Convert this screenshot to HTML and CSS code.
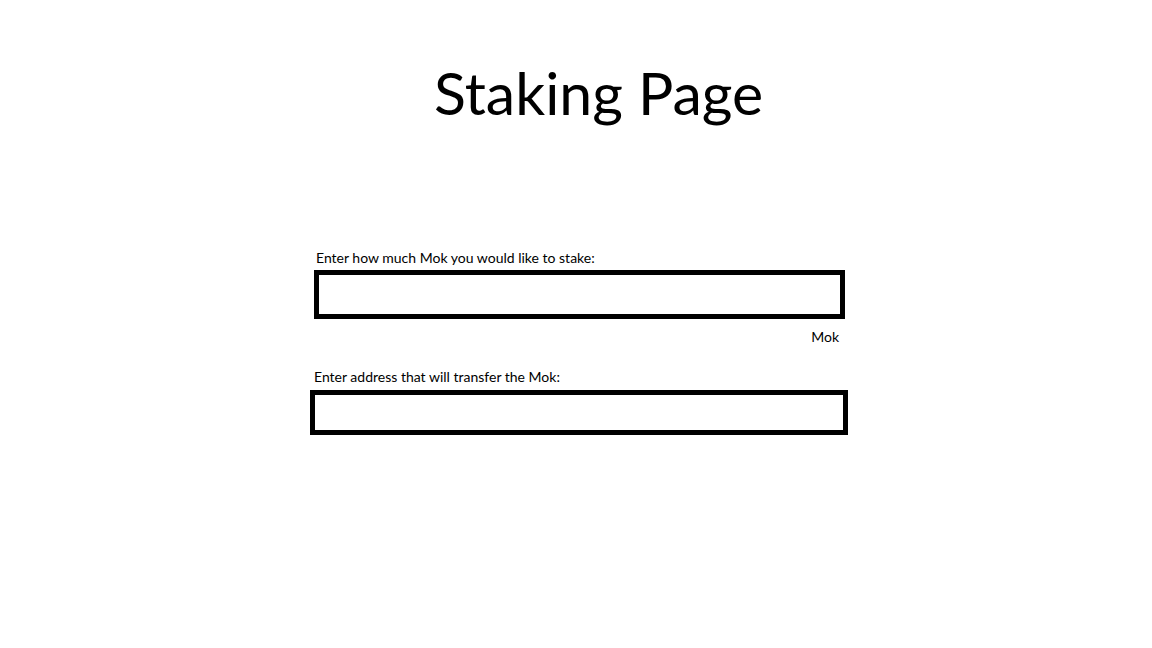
FILE: index.html
```html
<!DOCTYPE html>
<html>
<head>
<meta charset="utf-8">
<link rel="stylesheet" href="styles.css">
<title>Staking Page</title>
</head>
<body>
<main class="page">
  <h1 class="title">Staking Page</h1>
  <form class="stake-form">
    <div class="field field-amount">
      <label class="field-label" for="amount">Enter how much Mok you would like to stake:</label>
      <input class="field-input input-amount" id="amount" type="text">
      <span class="unit">Mok</span>
    </div>
    <div class="field field-address">
      <label class="field-label" for="address">Enter address that will transfer the Mok:</label>
      <input class="field-input input-address" id="address" type="text">
    </div>
  </form>
</main>
</body>
</html>
```
FILE: styles.css
```css
html, body {
  margin: 0;
  padding: 0;
  background: #ffffff;
}
body {
  font-family: Lato, "Open Sans", sans-serif;
  color: #000;
}
.page {
  display: flex;
  flex-direction: column;
  width: 1152px;
  height: 648px;
}
.title {
  margin: 58px 0 0 434px;
  font-family: Lato, sans-serif;
  font-weight: 400;
  font-size: 59px;
  line-height: 70px;
}
.stake-form {
  display: flex;
  flex-direction: column;
  margin-top: 121px;
}
.field {
  display: flex;
  flex-direction: column;
  align-items: flex-start;
}
.field-label {
  font-size: 14px;
  line-height: 18px;
}
.field-amount {
  margin-left: 314px;
  width: 531px;
}
.field-amount .field-label {
  margin-left: 2px;
}
.field-input {
  box-sizing: border-box;
  border: 5px solid #000;
  background: #fff;
  margin: 3px 0 0 0;
  padding: 0;
  outline: none;
}
.input-amount {
  width: 531px;
  height: 49px;
}
.unit {
  align-self: flex-end;
  font-size: 14px;
  line-height: 18px;
  margin: 9px 6px 0 0;
}
.field-address {
  margin-left: 310px;
  margin-top: 22px;
  width: 538px;
}
.field-address .field-label {
  margin-left: 4px;
}
.input-address {
  width: 538px;
  height: 45px;
  margin-top: 4px;
}
```
